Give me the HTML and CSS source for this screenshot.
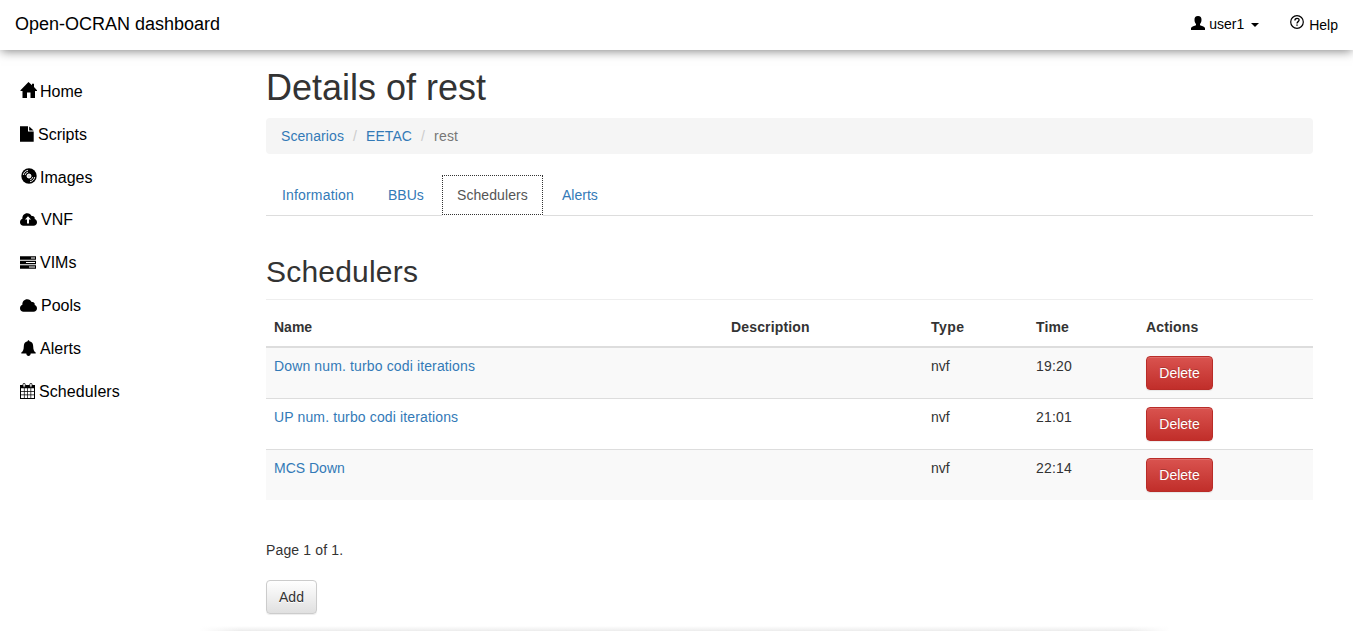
FILE: index.html
```
<!DOCTYPE html>
<html lang="en">
<head>
<meta charset="utf-8">
<title>Open-OCRAN dashboard</title>
<link rel="stylesheet" href="styles.css">
</head>
<body>
<header class="navbar">
  <a class="brand"><span>Open-OCRAN dashboard</span></a>
  <nav class="account">
    <a class="user">
      <svg width="14" height="14" viewBox="0 0 14 14"><path d="M7 0C9.500 0 10.600 1.500 10.500 3.800C10.500 5.800 9.800 7.200 9 8V9.300C10.300 10.200 13.500 10.400 14 12V14H0V12C.5 10.400 3.700 10.200 5 9.300V8C4.200 7.200 3.500 5.800 3.500 3.800C3.400 1.500 4.500 0 7 0Z"/></svg>
      <span class="username">user1</span><i class="caret"></i>
    </a>
    <a class="help">
      <svg width="14" height="14" viewBox="0 0 14 14"><g fill="none" stroke="#000"><circle cx="7" cy="7" r="6.300" stroke-width="1.200"/><path d="M4.900 5.400C4.900 2.600 9.200 2.700 9.100 5.100C9.100 6.700 7 6.600 7 8.500" stroke-width="1.300"/></g><path d="M6.300 9.400H7.700V10.800H6.300Z"/></svg>
      <span>Help</span>
    </a>
  </nav>
</header>
<div class="layout">
  <aside class="sidebar">
    <a class="home"><svg width="17" height="16" viewBox="0 0 17 16"><path d="M8.500 0L12 3.200V1.800H14V5L17 8.200V9H15V16H10.500V10.500H7V16H2.500V9H.5V8.200Z"/></svg><span>Home</span></a>
    <a class="scripts"><svg width="14" height="16" viewBox="0 0 14 16"><path d="M0 .3H8V5.500H13.700V15.700H0Z"/><path d="M9.200 .4L13.600 4.500H9.200Z"/></svg><span>Scripts</span></a>
    <a class="images"><svg width="16" height="16" viewBox="0 0 16 16"><circle cx="8" cy="8" r="7.700"/><g fill="none" stroke="#fff"><circle cx="8" cy="8" r="2" stroke-width="1" fill="#fff"/><path stroke-width=".9" d="M2.300 7C2.600 4.500 4.500 2.600 7 2.300M4.200 7C4.500 5.500 5.500 4.500 7 4.200M13.700 9C13.400 11.500 11.500 13.400 9 13.700M11.800 9C11.500 10.500 10.500 11.500 9 11.800"/></g><circle cx="8" cy="8" r=".8" fill="#999"/></svg><span>Images</span></a>
    <a class="vnf"><svg width="17" height="13" viewBox="0 0 17 13"><path d="M3.500 12.800C1.500 12.800 0 11.200 0 9.200C0 7.500 1 6.300 2.400 5.700C2.200 2.500 4.300 .2 7.200 .2C9.300 .2 10.900 1.400 11.600 3.100C13.500 2.500 15.200 4 14.700 6C16.100 6.400 17 7.700 17 9.300C17 11.300 15.500 12.800 13.500 12.800Z"/><path fill="#fff" d="M8 3.300L11 6.500H9V10.500H7V6.500H5Z"/></svg><span>VNF</span></a>
    <a class="vims"><svg width="16" height="13" viewBox="0 0 16 13"><path d="M0 .2H16V3.700H0ZM0 4.700H16V8.200H0ZM0 9.200H16V12.700H0Z"/><path fill="#fff" d="M11 1.500H15V2.500H11ZM6 6H15V7H6ZM9 10.500H15V11.500H9Z"/></svg><span>VIMs</span></a>
    <a class="pools"><svg width="17" height="13" viewBox="0 0 17 13"><path d="M3.500 12.800C1.500 12.800 0 11.200 0 9.200C0 7.500 1 6.300 2.400 5.700C2.200 2.500 4.300 .2 7.200 .2C9.300 .2 10.900 1.400 11.600 3.100C13.500 2.500 15.200 4 14.700 6C16.100 6.400 17 7.700 17 9.300C17 11.300 15.500 12.800 13.500 12.800Z"/></svg><span>Pools</span></a>
    <a class="alerts"><svg width="15" height="16" viewBox="0 0 15 16"><path d="M6.600 1.300C6.600-.2 8.400-.2 8.400 1.300C11.300 1.800 12.200 4 12.200 6.500C12.200 10 13.300 11.500 14.700 12.600V13.500H9.700C9.700 15 8.700 15.900 7.500 15.900C6.300 15.900 5.300 15 5.300 13.500H.3V12.600C1.700 11.500 2.800 10 2.800 6.500C2.800 4 3.700 1.800 6.600 1.300Z"/></svg><span>Alerts</span></a>
    <a class="schedulers"><svg width="15" height="16" viewBox="0 0 15 16"><path d="M0 2H15V16H0Z"/><path fill="#fff" d="M1 5.200H3.900V8.100H1ZM4.600 5.200H7.200V8.100H4.600ZM7.900 5.200H10.500V8.100H7.900ZM11.200 5.200H14V8.100H11.200ZM1 8.800H3.900V11.600H1ZM4.600 8.800H7.200V11.600H4.600ZM7.900 8.800H10.500V11.600H7.900ZM11.200 8.800H14V11.600H11.200ZM1 12.300H3.900V15H1ZM4.600 12.300H7.200V15H4.600ZM7.900 12.300H10.500V15H7.900ZM11.200 12.300H14V15H11.200Z"/><rect x="3" y=".4" width="2.200" height="3.800" rx="1" fill="#fff" stroke="#000" stroke-width=".8"/><rect x="9.800" y=".4" width="2.200" height="3.800" rx="1" fill="#fff" stroke="#000" stroke-width=".8"/></svg><span>Schedulers</span></a>
  </aside>
  <main class="content">
    <h1><span>Details of rest</span></h1>
    <ol class="breadcrumb">
      <li><a class="crumb-scenarios">Scenarios</a></li><li class="slash">/</li><li><a class="crumb-site">EETAC</a></li><li class="slash">/</li><li class="current">rest</li>
    </ol>
    <div class="tabs">
      <a class="tab tab-info"><span>Information</span></a>
      <a class="tab tab-bbus"><span>BBUs</span></a>
      <a class="tab tab-schedulers active"><span>Schedulers</span></a>
      <a class="tab tab-alerts"><span>Alerts</span></a>
    </div>
    <h2><span>Schedulers</span></h2>
    <table class="table">
      <colgroup><col class="col-name"><col class="col-description"><col class="col-type"><col class="col-time"><col class="col-actions"></colgroup>
      <thead><tr><th class="th-name">Name</th><th>Description</th><th class="th-type">Type</th><th>Time</th><th>Actions</th></tr></thead>
      <tbody>
        <tr><td><a class="long">Down num. turbo codi iterations</a></td><td></td><td>nvf</td><td class="time">19:20</td><td><button class="btn btn-danger">Delete</button></td></tr>
        <tr><td><a class="long">UP num. turbo codi iterations</a></td><td></td><td>nvf</td><td class="time">21:01</td><td><button class="btn btn-danger">Delete</button></td></tr>
        <tr><td><a>MCS Down</a></td><td></td><td>nvf</td><td class="time">22:14</td><td><button class="btn btn-danger">Delete</button></td></tr>
      </tbody>
    </table>
    <p class="pager"><span>Page 1 of 1.</span></p>
    <button class="btn btn-default">Add</button>
  </main>
</div>
<footer class="footer"></footer>
</body>
</html>
```
FILE: styles.css
```
* { box-sizing: border-box; }
html, body { height: 100%; overflow: hidden; }
body {
  margin: 0;
  display: flex;
  flex-direction: column;
  background: #fff;
  color: #333;
  font: 14px/20px "Liberation Sans", Arial, sans-serif;
}
svg { display: block; flex: none; fill: #000; }

.navbar {
  flex: none;
  height: 50px;
  padding: 0 15px;
  display: flex;
  justify-content: space-between;
  color: #000;
  background: #fff;
  box-shadow: 0 2px 10px -1px rgba(0, 0, 0, .5);
}
.brand { font-size: 18px; line-height: 49px; }
.account { display: flex; }
.user { display: flex; align-items: center; width: 99px; padding-bottom: 2px; }
.user svg { margin-bottom: 2px; }
.username { margin-left: 4px; }
.caret { margin: 2px 0 0 7px; border: 4px solid transparent; border-top-color: #000; border-bottom: 0; }
.help { display: flex; align-items: center; gap: 5px; }
.help svg { margin-bottom: 6px; }

.layout { display: flex; flex: none; height: 581px; }
.sidebar { width: 266px; padding: 30.45px 0 0 20px; font-size: 16px; color: #000; }
.sidebar a { display: flex; align-items: center; height: 22.86px; margin-bottom: 20px; gap: 4px; }
.sidebar svg { margin-bottom: 1.5px; }
.sidebar .home, .sidebar .images { gap: 3px; }
.sidebar .home svg { margin-bottom: 3px; }
.sidebar .images svg { margin: 0 0 3px 1px; }
.sidebar .alerts svg { margin-left: 1px; }
.sidebar .schedulers { letter-spacing: .08px; }

.content { width: 1047px; }
h1, h2 { margin: 0; font-weight: 400; }
h1 { height: 68px; padding-top: 18px; font-size: 36px; line-height: 40px; }
.breadcrumb {
  display: flex;
  height: 36px;
  margin: 0 0 21px;
  padding: 8px 15px;
  list-style: none;
  background: #f5f5f5;
  border-radius: 4px;
}
.breadcrumb .slash { width: 22px; text-align: center; color: #ccc; }
.breadcrumb .current { color: #777; letter-spacing: .2px; }
.crumb-scenarios, .crumb-site { letter-spacing: .08px; }
.breadcrumb a, .tab, .table a { color: #337ab7; }
.tabs { display: flex; height: 41px; border-bottom: 1px solid #ddd; }
.tab { height: 40px; padding: 10px 16px; margin-right: 2px; white-space: nowrap; }
.tab-info { width: 104px; letter-spacing: .17px; }
.tab-bbus { width: 68px; }
.tab-schedulers { width: 101px; letter-spacing: .08px; }
.tab.active {
  height: 40px;
  padding: 9px 14px;
  margin-right: 3px;
  color: #555;
  border: 1px dotted #333;
  background: #fff;
  box-shadow: 0 1px #fff;
}
h2 { height: 84px; padding-top: 39px; font-size: 30px; line-height: 33px; letter-spacing: .2px; border-bottom: 1px solid #eee; }

.table { width: 100%; margin-top: 10px; border-spacing: 0; table-layout: fixed; }
.col-name { width: 457px; }
.col-description { width: 200px; }
.col-type { width: 105px; }
.col-time { width: 110px; }
.col-actions { width: 175px; }
.table th { padding: 7px 8px 9px; text-align: left; letter-spacing: .16px; border-bottom: 2px solid #ddd; }
.table .th-name { letter-spacing: 0; }
.table .th-type { letter-spacing: .5px; }
.table td { height: 50px; padding: 8px; vertical-align: top; }
.table tr + tr td { height: 51px; border-top: 1px solid #ddd; }
.table tbody tr:nth-child(odd) { background: #f9f9f9; }
.table .long { letter-spacing: .135px; }
.table .time { letter-spacing: .2px; }

.btn {
  display: block;
  height: 34px;
  padding: 0;
  font: inherit;
  border-radius: 4px;
  box-shadow: inset 0 1px 0 rgba(255, 255, 255, .15), 0 1px 1px rgba(0, 0, 0, .075);
}
.btn-danger {
  width: 67px;
  color: #fff;
  border: 1px solid #b92c28;
  background: linear-gradient(#d9534f, #c12e2a);
  text-shadow: 0 -1px 0 rgba(0, 0, 0, .2);
}
.btn-default {
  width: 51px;
  color: #333;
  border: 1px solid #ccc;
  background: linear-gradient(#fff, #e0e0e0);
  text-shadow: 0 1px 0 #fff;
}
.pager { margin: 40px 0 20px; letter-spacing: .15px; }
.footer { flex: none; height: 2px; position: relative; background: #fff; }
.footer::before {
  content: "";
  position: absolute;
  left: 200px;
  bottom: 2px;
  width: 970px;
  height: 5px;
  background: linear-gradient(90deg, #fff, transparent 40px, transparent 930px, #fff), linear-gradient(#fff, #ececec);
}
```
